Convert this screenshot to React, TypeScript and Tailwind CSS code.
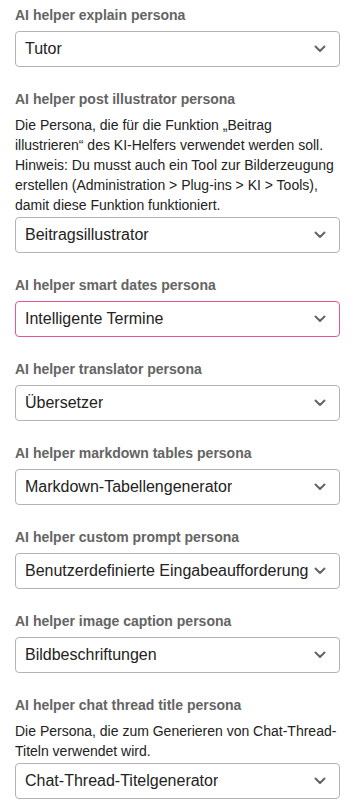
import React from "react";

type Item = { label: string; desc?: string; value: string; focused?: boolean };

const items: Item[] = [
  { label: "AI helper explain persona", value: "Tutor" },
  {
    label: "AI helper post illustrator persona",
    desc: "Die Persona, die für die Funktion „Beitrag illustrieren“ des KI-Helfers verwendet werden soll. Hinweis: Du musst auch ein Tool zur Bilderzeugung erstellen (Administration > Plug-ins > KI > Tools), damit diese Funktion funktioniert.",
    value: "Beitragsillustrator",
  },
  { label: "AI helper smart dates persona", value: "Intelligente Termine", focused: true },
  { label: "AI helper translator persona", value: "Übersetzer" },
  { label: "AI helper markdown tables persona", value: "Markdown-Tabellengenerator" },
  { label: "AI helper custom prompt persona", value: "Benutzerdefinierte Eingabeaufforderung" },
  { label: "AI helper image caption persona", value: "Bildbeschriftungen" },
  {
    label: "AI helper chat thread title persona",
    desc: "Die Persona, die zum Generieren von Chat-Thread-Titeln verwendet wird.",
    value: "Chat-Thread-Titelgenerator",
  },
];

function Chevron() {
  return (
    <svg width="12" height="8" viewBox="0 0 12 8" className="shrink-0">
      <path d="M1.5 1.5 L6 6 L10.5 1.5" fill="none" stroke="#646464" strokeWidth="2" strokeLinecap="round" strokeLinejoin="round" />
    </svg>
  );
}

export default function App() {
  return (
    <div
      className="w-[360px] min-h-[808px] bg-white pt-[5px] pl-[15px]"
      style={{ fontFamily: '"Liberation Sans", Arial, sans-serif' }}
    >
      {items.map((it, i) => (
        <div key={i} className="mb-[22px] w-[325px]">
          <div className="text-[14px] leading-[20px] font-bold text-[#646464] mb-[6px]">{it.label}</div>
          {it.desc && (
            <div className="text-[14px] leading-[20px] text-[#222222] mb-[2px] pr-[2px]">{it.desc}</div>
          )}
          <div
            className={
              it.focused
                ? "h-[36px] flex items-center justify-between rounded-[4px] border border-[#e3569a] pl-[9px] pr-[13px] bg-white"
                : "h-[36px] flex items-center justify-between rounded-[4px] border border-[#b3b3b3] pl-[9px] pr-[13px] bg-white"
            }
          >
            <span className="text-[16px] text-[#222222] whitespace-nowrap overflow-hidden">{it.value}</span>
            <Chevron />
          </div>
        </div>
      ))}
    </div>
  );
}
